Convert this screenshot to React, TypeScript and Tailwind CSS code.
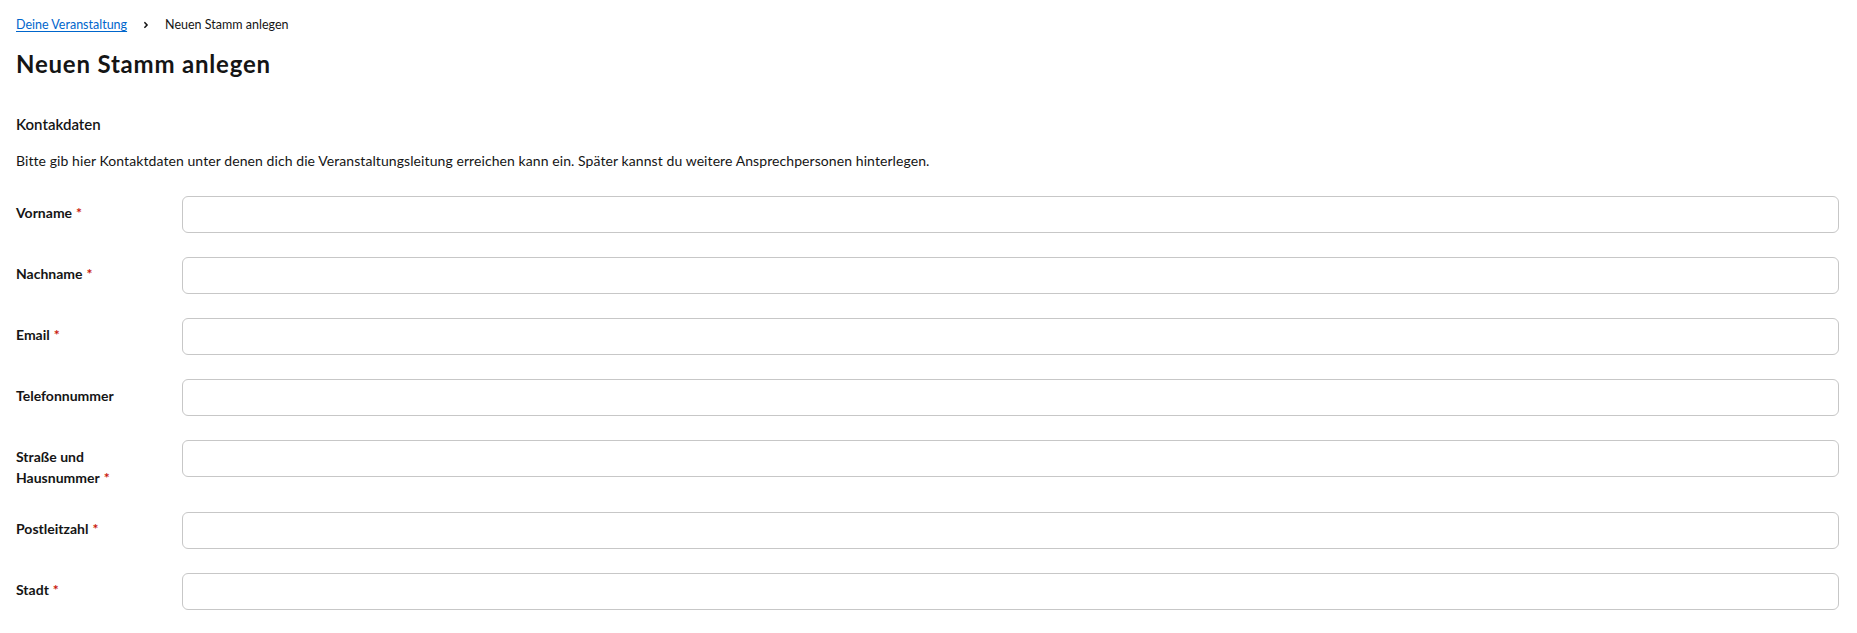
import { ReactNode } from 'react';

const fields: { label: ReactNode; required: boolean }[] = [
  { label: 'Vorname', required: true },
  { label: 'Nachname', required: true },
  { label: 'Email', required: true },
  { label: 'Telefonnummer', required: false },
  { label: 'Straße und Hausnummer', required: true },
  { label: 'Postleitzahl', required: true },
  { label: 'Stadt', required: true },
];

function Chevron() {
  return (
    <svg viewBox="0 0 256 512" className="w-[6px] h-[10px]" fill="#151515">
      <path d="M224.3 273l-136 136c-9.4 9.4-24.6 9.4-33.9 0l-22.6-22.6c-9.4-9.4-9.4-24.6 0-33.9l96.4-96.4-96.4-96.4c-9.4-9.4-9.4-24.6 0-33.9L54.3 103c9.4-9.4 24.6-9.4 33.9 0l136 136c9.5 9.4 9.5 24.6.1 34z" />
    </svg>
  );
}

export default function App() {
  return (
    <div className="min-h-screen bg-white text-[#151515] font-['Lato','Noto_Sans',sans-serif] px-4 pt-[14px]">
      <nav className="flex items-center text-[12.5px] leading-[21px]">
        <a href="#" className="text-[#0066cc] underline underline-offset-2">
          Deine Veranstaltung
        </a>
        <span className="mx-4 flex items-center">
          <Chevron />
        </span>
        <span>Neuen Stamm anlegen</span>
      </nav>

      <h1 className="mt-[13px] text-[24px] leading-[31px] font-bold tracking-[0.8px]">
        Neuen Stamm anlegen
      </h1>

      <h2 className="mt-[33px] text-[15px] leading-[24px] font-semibold">Kontakdaten</h2>

      <p className="mt-[14px] text-[14px] leading-[21px] tracking-[0.08px]">
        Bitte gib hier Kontaktdaten unter denen dich die Veranstaltungsleitung erreichen kann ein.
        Später kannst du weitere Ansprechpersonen hinterlegen.
      </p>

      <form className="mt-[25px] flex flex-col gap-6 pr-[2px]">
        {fields.map((f) => (
          <div key={String(f.label)} className="grid grid-cols-[150px_1fr] gap-x-4">
            <label className="pt-[6px] text-[14px] leading-[21px] font-bold">
              {f.label}
              {f.required && <span className="text-[#c9190b] ml-[4px]">*</span>}
            </label>
            <input
              type="text"
              className="h-[37px] w-full rounded-[6px] border border-[#c7c7c7] bg-white px-2 text-[14px] outline-none"
            />
          </div>
        ))}
      </form>
    </div>
  );
}
